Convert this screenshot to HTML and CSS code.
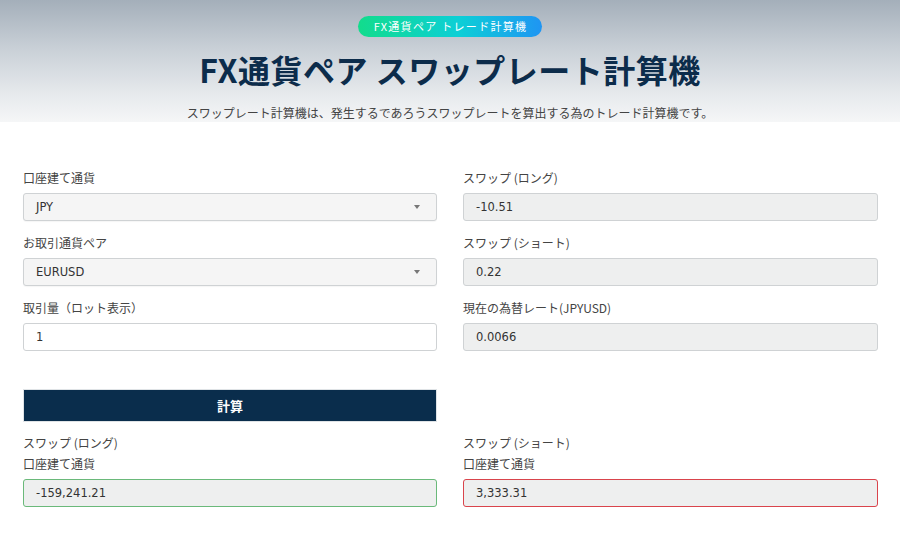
FILE: index.html
```html
<!DOCTYPE html>
<html lang="ja">
<head>
<meta charset="utf-8">
<title>FX通貨ペア スワップレート計算機</title>
<link rel="stylesheet" href="styles.css">
</head>
<body>
<header class="hero">
  <span class="badge">FX通貨ペア トレード計算機</span>
  <h1 class="title">FX通貨ペア スワップレート計算機</h1>
  <p class="lead">スワップレート計算機は、発生するであろうスワップレートを算出する為のトレード計算機です。</p>
</header>
<main class="calc">
  <div class="col">
    <div class="field">
      <label class="label">口座建て通貨</label>
      <div class="box select">JPY<span class="caret"></span></div>
    </div>
    <div class="field">
      <label class="label">お取引通貨ペア</label>
      <div class="box select">EURUSD<span class="caret"></span></div>
    </div>
    <div class="field">
      <label class="label">取引量（ロット表示）</label>
      <div class="box input">1</div>
    </div>
  </div>
  <div class="col">
    <div class="field">
      <label class="label">スワップ (ロング)</label>
      <div class="box readonly">-10.51</div>
    </div>
    <div class="field">
      <label class="label">スワップ (ショート)</label>
      <div class="box readonly">0.22</div>
    </div>
    <div class="field">
      <label class="label">現在の為替レート(JPYUSD)</label>
      <div class="box readonly">0.0066</div>
    </div>
  </div>
  <div class="col btn-row">
    <button class="btn">計算</button>
  </div>
  <div class="col"></div>
  <div class="col result">
    <label class="label">スワップ (ロング)</label>
    <label class="label">口座建て通貨</label>
    <div class="box readonly good">-159,241.21</div>
  </div>
  <div class="col result">
    <label class="label">スワップ (ショート)</label>
    <label class="label">口座建て通貨</label>
    <div class="box readonly bad">3,333.31</div>
  </div>
</main>
</body>
</html>
```
FILE: styles.css
```css
* { box-sizing: border-box; }
html, body {
  margin: 0;
  padding: 0;
  background: #ffffff;
  font-family: "Noto Sans", "Noto Sans CJK JP", sans-serif;
  color: #444;
}
.hero {
  height: 122px;
  background: linear-gradient(to bottom, #a4afba 0%, #c9d0d7 40%, #e7eaed 78%, #f5f6f7 100%);
  display: flex;
  flex-direction: column;
  align-items: center;
  padding-top: 16px;
}
.badge {
  display: inline-block;
  height: 21px;
  line-height: 21px;
  padding: 0 15px 0 16px;
  border-radius: 11px;
  background: linear-gradient(to right, #12dc8c 0%, #0ccfd6 55%, #1f95f3 100%);
  color: #ffffff;
  font-family: "Noto Sans CJK JP", sans-serif;
  font-size: 11px;
  letter-spacing: 1.3px;
}
.title {
  margin: 12px 0 0;
  font-family: "Noto Sans CJK JP", sans-serif;
  font-weight: 700;
  font-size: 32px;
  line-height: 40px;
  color: #0c2c4b;
  letter-spacing: 0.5px;
}
.lead {
  margin: 16px 0 0;
  font-family: "Noto Sans CJK JP", sans-serif;
  font-size: 12px;
  line-height: 16px;
  color: #444;
}
.calc {
  display: grid;
  grid-template-columns: 414px 415px;
  column-gap: 26px;
  padding: 46px 22px 0 23px;
}
.field {
  margin-bottom: 12px;
}
.label {
  display: block;
  font-family: "Noto Sans CJK JP", sans-serif;
  font-size: 12px;
  line-height: 20px;
  color: #444;
}
.field .label {
  margin-bottom: 5px;
}
.box {
  position: relative;
  height: 28px;
  line-height: 26px;
  border: 1px solid #cfd2d4;
  border-radius: 3px;
  padding: 0 12px;
  font-family: "DejaVu Sans", "Noto Sans", sans-serif;
  font-size: 11.5px;
  color: #333;
}
.select {
  background: #f5f5f5;
  box-shadow: 0 1px 1px rgba(0,0,0,0.04);
}
.input {
  background: #ffffff;
}
.readonly {
  background: #eeefef;
}
.caret {
  position: absolute;
  right: 16px;
  top: 11px;
  width: 0;
  height: 0;
  border-left: 3px solid transparent;
  border-right: 3px solid transparent;
  border-top: 4px solid #777;
}
.btn-row {
  padding-top: 26px;
}
.btn {
  display: block;
  width: 100%;
  height: 33px;
  border: 1px solid #dfe3e6;
  background: #0a2d4c;
  color: #ffffff;
  font-family: "Noto Sans CJK JP", sans-serif;
  font-weight: 700;
  font-size: 13px;
  cursor: pointer;
}
.result {
  padding-top: 11px;
}
.result .label + .label {
  margin-top: 1px;
  margin-bottom: 5px;
}
.good {
  border-color: #6ab97a;
}
.bad {
  border-color: #d9444c;
}
```
